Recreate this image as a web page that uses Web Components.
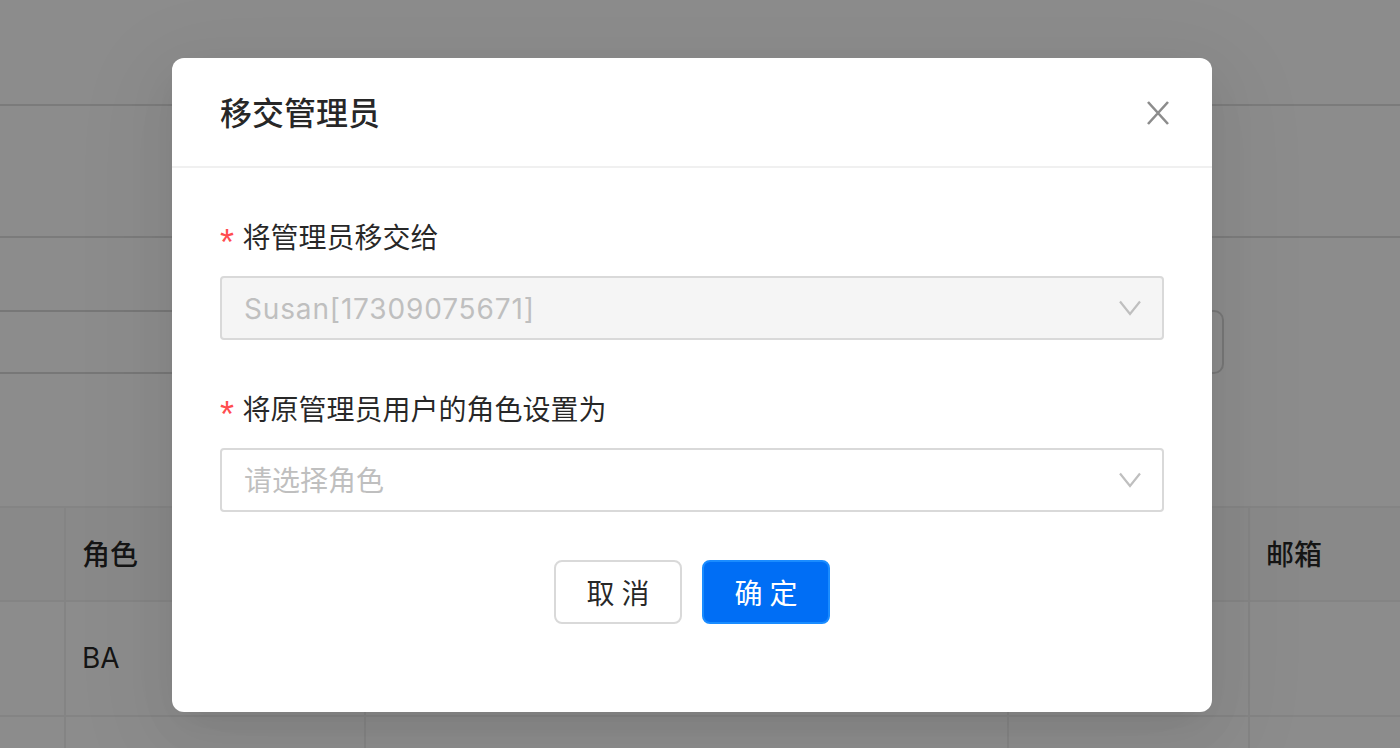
<!DOCTYPE html>
<html lang="zh-CN"><head><meta charset="utf-8"><style>
html,body{margin:0;padding:0;height:100%;overflow:hidden}
body{font-family:Inter,"Noto Sans CJK SC",sans-serif;font-size:28px;color:rgba(0,0,0,.85)}
.btns{display:flex;justify-content:center;gap:20px}
</style></head><body>
<app-page>
  <bg-table></bg-table>
  <modal-dialog heading="移交管理员">
    <form-item label="将管理员移交给"><select-box value="Susan[17309075671]" disabled></select-box></form-item>
    <form-item label="将原管理员用户的角色设置为"><select-box value="请选择角色"></select-box></form-item>
    <div slot="footer" class="btns"><ui-button>取 消</ui-button><ui-button primary>确 定</ui-button></div>
  </modal-dialog>
</app-page>
<script>
function def(name, html){
  customElements.define(name, class extends HTMLElement{
    connectedCallback(){
      if(this.shadowRoot) return;
      const r=this.attachShadow({mode:'open'});
      r.innerHTML=typeof html==='function'?html(this):html;
    }
  });
}
def('app-page',`<style>
:host{display:block;position:relative;width:1400px;height:748px;overflow:hidden;background:#fff}
.mask{position:absolute;inset:0;padding-right:16px;background:rgba(0,0,0,.45);display:flex;justify-content:center;align-items:flex-start}
</style><slot></slot><div class="mask"><slot name="m"></slot></div>`);
def('bg-table',`<style>
:host{display:block;width:1400px}
.band{box-sizing:border-box;border-bottom:2px solid #e0e0e0}
.a{height:106px}.b{height:132px}
.field{box-sizing:content-box;height:60px;margin:72px 0 0 -20px;width:1240px;border:2px solid #d9d9d9;border-radius:0 10px 10px 0}
.table{margin-top:132px;border-top:2px solid #f0f0f0;display:grid;grid-template-columns:66px 300px 643px 241px 1fr}
.table>div{border-bottom:2px solid #f0f0f0;border-right:2px solid #f0f0f0;box-sizing:border-box;padding:0 0 2px 16px;display:flex;align-items:center}
.h{height:94px;background:#fafafa;font-weight:500}
.r{height:115px}
.s{height:60px}
.table>div:nth-child(5n){border-right:0}
</style>
<div class="band a"></div><div class="band b"></div><div class="field"></div>
<div class="table">
<div class="h"></div><div class="h">角色</div><div class="h"></div><div class="h"></div><div class="h">邮箱</div>
<div class="r"></div><div class="r">BA</div><div class="r"></div><div class="r"></div><div class="r"></div>
<div class="s"></div><div class="s"></div><div class="s"></div><div class="s"></div><div class="s"></div>
</div>`);
def('modal-dialog',el=>{el.slot='m';return `<style>
:host{display:block;width:1040px;margin-top:58px;background:#fff;border-radius:12px;box-shadow:0 12px 32px -16px rgba(0,0,0,.08),0 18px 56px 0 rgba(0,0,0,.05),0 24px 96px 32px rgba(0,0,0,.03)}
header{display:flex;justify-content:space-between;align-items:center;height:108px;padding:0 42px 0 48px;border-bottom:2px solid #f0f0f0;font-size:32px;font-weight:500;line-height:44px}
h2{margin:0;font:inherit;position:relative;top:2px}
svg{display:block;position:relative;top:1px}
.body{padding:48px 48px 88px}
</style><header><h2>${el.getAttribute('heading')}</h2>
<svg width="24" height="24" viewBox="0 0 24 24" fill="none" stroke="#8c8c8c" stroke-width="2.6"><path d="M2 1 22 23M22 1 2 23"/></svg></header>
<div class="body"><slot></slot><slot name="footer"></slot></div>`});
def('form-item',el=>`<style>
:host{display:block;margin-bottom:48px}
.l{display:flex;align-items:center;height:44px;margin-bottom:16px;line-height:44px;color:rgba(0,0,0,.85)}
.s{color:#ff4d4f;font-family:"Liberation Sans",sans-serif;font-size:36px;line-height:44px;height:44px;width:23px;flex:none;box-sizing:border-box;position:relative;top:5px}
.t{position:relative;left:-.5px}
</style><div class="l"><span class="s">*</span><span class="t">${el.getAttribute('label')}</span></div><slot></slot>`);
def('select-box',el=>{const d=el.hasAttribute('disabled');return `<style>
:host{display:flex;align-items:center;justify-content:space-between;box-sizing:border-box;height:64px;padding:0 22px;border:2px solid #d9d9d9;border-radius:4px;color:#bfbfbf;background:${d?'#f5f5f5':'#fff'}}
span{letter-spacing:${d?'.85px':'0'};position:relative;top:${d?'.5px':'-1.5px'}}
svg{display:block;margin-right:-1px}
</style><span>${el.getAttribute('value')}</span>
<svg width="22" height="16" viewBox="0 0 22 16" fill="none" stroke="#bfbfbf" stroke-width="2.2"><path d="M1 1.5 11 14 21 1.5"/></svg>`});
def('ui-button',el=>{const p=el.hasAttribute('primary');return `<style>
:host{display:flex;align-items:center;justify-content:center;box-sizing:border-box;width:128px;height:64px;border-radius:8px;border:2px solid ${p?'#1a8cff':'#d9d9d9'};background:${p?'#006ef5':'#fff'};color:${p?'#fff':'rgba(0,0,0,.85)'};word-spacing:-1px}
</style><slot></slot>`});
</script>
</body></html>
